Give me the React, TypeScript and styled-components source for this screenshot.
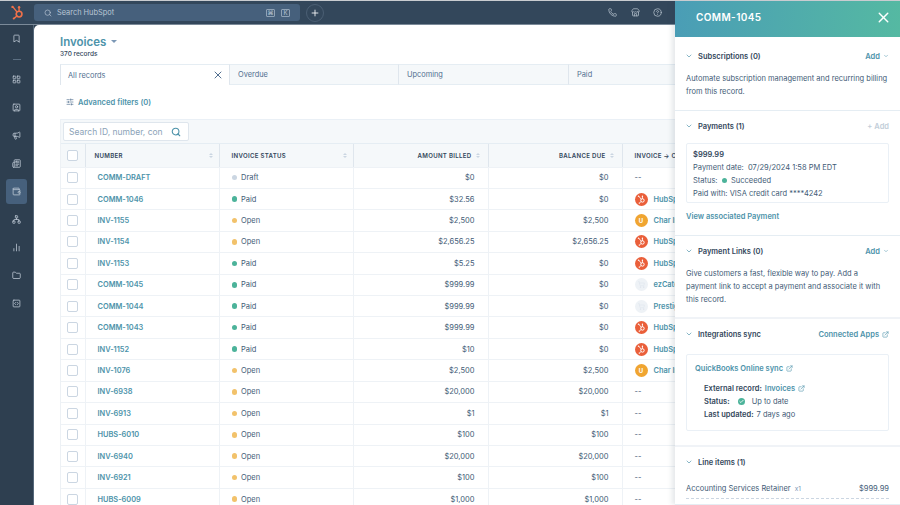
import React from "react";
import styled, { createGlobalStyle } from "styled-components";
import {
  Bookmark,
  ChartNoAxesColumn,
  ChevronDown,
  CircleHelp,
  Check,
  ExternalLink,
  Folder,
  LayoutGrid,
  Megaphone,
  Network,
  Newspaper,
  Phone,
  Plus,
  Search,
  ShoppingCart,
  SlidersHorizontal,
  SquareCode,
  SquareUser,
  Store,
  Wallet,
  X,
} from "lucide-react";

const GlobalStyle = createGlobalStyle`
  html, body { margin: 0; padding: 0; background: #fff; }
  body { font-family: "Inter", "Liberation Sans", sans-serif; color: #33475b; }
  * { box-sizing: border-box; }
`;

const Shell = styled.div`
  position: relative;
  width: 900px;
  height: 505px;
  overflow: hidden;
  display: grid;
  grid-template-columns: 34px 1fr;
  grid-template-rows: 24px 1fr;
  background: #2e3f50;
  border-top: 1px solid #c9ccd0;
`;

const TopBar = styled.header`
  grid-column: 1 / 3;
  display: flex;
  align-items: center;
  padding-right: 238px;
  background: #33475b;
  border-bottom: 1px solid #7b8a99;
`;

const LogoSlot = styled.div`
  width: 34px;
  display: flex;
  justify-content: center;
`;

const SearchBox = styled.div`
  width: 266px;
  height: 17px;
  display: flex;
  align-items: center;
  gap: 5px;
  padding: 0 10px;
  border-radius: 3px;
  background: #46607c;
  color: #b9c6d4;
  font-size: 7.4px;
`;

const SearchLabel = styled.span`
  flex: 1;
`;

const Key = styled.span`
  width: 9px;
  height: 8px;
  display: flex;
  align-items: center;
  justify-content: center;
  border: 1px solid #8fa2b6;
  border-radius: 1px;
  font-size: 6px;
  margin-left: 1px;
`;

const AddButton = styled.div`
  width: 18px;
  height: 18px;
  margin-left: 6px;
  display: flex;
  align-items: center;
  justify-content: center;
  border: 1px solid #4b5f74;
  border-radius: 50%;
  color: #fff;
`;

const TopIcons = styled.div`
  margin-left: auto;
  display: flex;
  gap: 13.5px;
  color: #b4c0cc;
`;

const SideBar = styled.nav`
  display: flex;
  flex-direction: column;
  align-items: center;
  padding-top: 0.5px;
  background: #2e3f50;
  border-right: 1px solid #56687a;
`;

const SideItem = styled.div<{ $active?: boolean }>`
  width: 21px;
  height: 25px;
  margin-bottom: 3px;
  flex: none;
  display: flex;
  align-items: center;
  justify-content: center;
  border-radius: 3px;
  color: #c3ced9;
  background: ${(p) => (p.$active ? "#46607c" : "transparent")};
`;

const SideRule = styled.div`
  width: 8px;
  height: 1px;
  margin: 5px 0 7px;
  flex: none;
  background: #5c6f82;
`;

const Main = styled.main`
  position: relative;
  background: #fff;
  border-top-left-radius: 5px;
  overflow: hidden;
  padding: 10px 0 0 26px;
`;

const TitleRow = styled.div`
  display: flex;
  align-items: center;
  gap: 5px;
  height: 13px;
  color: #4d93aa;
  font-size: 11.5px;
  font-weight: 600;
`;

const Caret = styled.span`
  width: 0;
  height: 0;
  border-left: 3px solid transparent;
  border-right: 3px solid transparent;
  border-top: 3.5px solid #7c98b6;
`;

const RecordCount = styled.div`
  margin-top: 1px;
  height: 10px;
  font-size: 6.5px;
  font-weight: 500;
  line-height: 10px;
`;

const Tabs = styled.div`
  margin-top: 5px;
  height: 21px;
  display: grid;
  grid-template-columns: 169px 169px 170px 260px;
  width: 800px;
`;

const Tab = styled.div<{ $active?: boolean }>`
  display: flex;
  align-items: center;
  justify-content: space-between;
  padding: 0 5px 0 ${(p) => (p.$active ? 7 : 8)}px;
  font-size: 7.4px;
  color: #516f90;
  background: ${(p) => (p.$active ? "#fff" : "#f5f8fa")};
  border-top: 1px solid #e5edf3;
  border-left: 1px solid #dfe6ed;
  border-bottom: ${(p) => (p.$active ? "0" : "1px solid #e5edf3")};
`;

const FilterRow = styled.div`
  height: 34px;
  display: flex;
  align-items: center;
  gap: 4px;
  padding-left: 6px;
  color: #4d93aa;
  font-size: 7.6px;
  font-weight: 600;
`;

const FilterIcon = styled.span`
  color: #516f90;
  display: flex;
`;

const TableWrap = styled.div`
  width: 800px;
  border-left: 1px solid #edf1f5;
`;

const SearchBand = styled.div`
  height: 24px;
  display: flex;
  align-items: center;
  padding-left: 2px;
  background: #f5f8fa;
  border-top: 1px solid #eaf0f6;
`;

const TableSearch = styled.div`
  width: 126px;
  height: 19px;
  display: flex;
  align-items: center;
  justify-content: space-between;
  padding: 0 7px 0 5px;
  background: #fff;
  border: 1px solid #dfe6ed;
  border-radius: 2px;
  color: #8ca3b8;
  font-size: 8.5px;
  white-space: nowrap;
  overflow: hidden;
`;

const SearchGlyph = styled(Search)`
  color: #4d93aa;
  flex: none;
`;

const Row = styled.div<{ $head?: boolean }>`
  display: grid;
  grid-template-columns: 24.5px 134px 134px 135px 134px 1fr;
  height: ${(p) => (p.$head ? "24.5px" : "21.43px")};
  background: ${(p) => (p.$head ? "#f5f8fa" : "#fff")};
  border-top: ${(p) => (p.$head ? "1px solid #e5edf3" : "0")};
  border-bottom: 1px solid #eef2f6;
`;

const Cell = styled.div<{ $right?: boolean; $head?: boolean }>`
  display: flex;
  align-items: center;
  justify-content: ${(p) => (p.$right ? "flex-end" : "flex-start")};
  padding: ${(p) => (p.$right ? "0 13px 0 0" : "0 0 0 12px")};
  border-right: 1px solid ${(p) => (p.$head ? "#dfe6ed" : "#eef2f6")};
  font-size: 7.5px;
  color: #425b76;
  white-space: nowrap;
  overflow: hidden;
`;

const CheckCell = styled(Cell)`
  padding: 0;
  justify-content: center;
`;

const HeadCell = styled(Cell)<{ $pad?: number }>`
  justify-content: ${(p) => (p.$right ? "flex-end" : "space-between")};
  padding: ${(p) => (p.$right ? "0 8px 0 0" : `0 6px 0 ${p.$pad ?? 12}px`)};
  gap: 4px;
  font-size: 6.1px;
  font-weight: 600;
  letter-spacing: 0.3px;
  color: #33475b;
`;

const Box = styled.span`
  width: 11px;
  height: 11px;
  background: #fff;
  border: 1px solid #cbd6e2;
  border-radius: 2px;
`;

const Sort = styled.span`
  display: flex;
  flex-direction: column;
  gap: 1px;
  &::before,
  &::after {
    content: "";
    width: 0;
    height: 0;
    border-left: 2px solid transparent;
    border-right: 2px solid transparent;
  }
  &::before { border-bottom: 2.5px solid #cbd6e2; }
  &::after { border-top: 2.5px solid #cbd6e2; }
`;

const RecordLink = styled.span`
  color: #4d93aa;
  font-size: 7.4px;
  font-weight: 600;
`;

const Dot = styled.span<{ $color: string }>`
  width: 5.5px;
  height: 5.5px;
  margin-right: 4px;
  border-radius: 50%;
  flex: none;
  background: ${(p) => p.$color};
`;

const PaymentDot = styled(Dot)`
  margin: 0 1px;
`;

const Avatar = styled.span<{ $color: string }>`
  width: 13px;
  height: 13px;
  margin-right: 6px;
  border-radius: 50%;
  flex: none;
  display: flex;
  align-items: center;
  justify-content: center;
  background: ${(p) => p.$color};
  color: #fff;
  font-size: 6px;
  font-weight: 700;
`;

const Panel = styled.aside`
  position: absolute;
  top: 0;
  right: 0;
  bottom: 0;
  width: 225px;
  background: #fff;
  box-shadow: -3px 0 5px rgba(45, 62, 80, 0.12);
  font-size: 7.5px;
  color: #425b76;
  line-height: 13px;
`;

const PanelHead = styled.div`
  height: 36px;
  display: flex;
  align-items: center;
  justify-content: space-between;
  padding: 0 8px 3px 21px;
  color: #fff;
  font-size: 10px;
  font-weight: 600;
  letter-spacing: 0.4px;
  background: linear-gradient(95deg, #4a9db6, #55b9a2);
`;

const Section = styled.section<{ $h: number; $thick?: boolean }>`
  display: flow-root;
  height: ${(p) => p.$h}px;
  padding: 0 11px;
  border-bottom: ${(p) => (p.$thick ? "2px solid #f0f3f7" : "1px solid #e5edf3")};
`;

const SectionTitle = styled.div<{ $top: number }>`
  display: flex;
  align-items: center;
  height: 12px;
  margin-top: ${(p) => p.$top}px;
  font-weight: 600;
  color: #33475b;
`;

const Chevron = styled(ChevronDown)`
  color: #4d93aa;
  margin-right: 5px;
  margin-left: -1px;
  flex: none;
`;

const ActionLink = styled.span<{ $muted?: boolean }>`
  margin-left: auto;
  display: flex;
  align-items: center;
  gap: 3px;
  font-weight: 600;
  color: ${(p) => (p.$muted ? "#c2ced9" : "#4d93aa")};
`;

const Body = styled.p<{ $top: number }>`
  margin: ${(p) => p.$top}px 0 0;
  width: 202px;
`;

const Card = styled.div<{ $h: number; $pad: string; $top: number }>`
  height: ${(p) => p.$h}px;
  margin-top: ${(p) => p.$top}px;
  padding: ${(p) => p.$pad};
  border: 1px solid #eaf0f6;
  border-radius: 2px;
`;

const Strong = styled.b`
  display: block;
  font-weight: 600;
  color: #33475b;
`;

const Inline = styled.div`
  display: flex;
  align-items: center;
  gap: 3px;
  white-space: nowrap;
`;

const TextLink = styled.span`
  color: #4d93aa;
  font-weight: 600;
`;

const LinkBelow = styled(TextLink)`
  display: block;
  margin-top: 7px;
`;

const Indented = styled.div`
  margin: 7px 0 0 9px;
`;

const SyncBadge = styled.span`
  width: 7px;
  height: 7px;
  margin: 0 4px 0 5px;
  display: flex;
  align-items: center;
  justify-content: center;
  border-radius: 50%;
  background: #4cb39a;
  color: #fff;
`;

const LineItem = styled.div`
  height: 20px;
  margin-top: 11px;
  display: flex;
  align-items: center;
  justify-content: space-between;
  border-bottom: 1px dashed #cbd6e2;
`;

const Qty = styled.span`
  margin-left: 4px;
  font-size: 6.5px;
  color: #7c98b6;
`;

const HubLogo = ({ size, color }: { size: number; color: string }) => (
  <svg width={size} height={size} viewBox="0 0 24 24" fill="none">
    <circle cx="14.5" cy="14.5" r="4.6" stroke={color} strokeWidth="2.6" />
    <path d="M14.5 9.5V4.5M5 3.5l6 7.5M7 21l4-3.5" stroke={color} strokeWidth="2.2" strokeLinecap="round" />
    <circle cx="14.5" cy="3.5" r="1.9" fill={color} />
    <circle cx="4" cy="3" r="1.9" fill={color} />
    <circle cx="6" cy="21.5" r="1.7" fill={color} />
  </svg>
);

type Company = "hub" | "char" | "ez" | "prest" | null;

const rows: [string, "Draft" | "Paid" | "Open", string, string, Company][] = [
  ["COMM-DRAFT", "Draft", "$0", "$0", null],
  ["COMM-1046", "Paid", "$32.56", "$0", "hub"],
  ["INV-1155", "Open", "$2,500", "$2,500", "char"],
  ["INV-1154", "Open", "$2,656.25", "$2,656.25", "hub"],
  ["INV-1153", "Paid", "$5.25", "$0", "hub"],
  ["COMM-1045", "Paid", "$999.99", "$0", "ez"],
  ["COMM-1044", "Paid", "$999.99", "$0", "prest"],
  ["COMM-1043", "Paid", "$999.99", "$0", "hub"],
  ["INV-1152", "Paid", "$10", "$0", "hub"],
  ["INV-1076", "Open", "$2,500", "$2,500", "char"],
  ["INV-6938", "Open", "$20,000", "$20,000", null],
  ["INV-6913", "Open", "$1", "$1", null],
  ["HUBS-6010", "Open", "$100", "$100", null],
  ["INV-6940", "Open", "$20,000", "$20,000", null],
  ["INV-6921", "Open", "$100", "$100", null],
  ["HUBS-6009", "Open", "$1,000", "$1,000", null],
];

const statusColors = { Draft: "#cbd6e2", Paid: "#4cb39a", Open: "#f2c26b" };

const companyCell = (company: Company) => {
  if (company === "hub")
    return (
      <>
        <Avatar $color="#ea5f3a"><HubLogo size={9} color="#fff" /></Avatar>
        <RecordLink>HubSpot</RecordLink>
      </>
    );
  if (company === "char")
    return (
      <>
        <Avatar $color="#f0a531">U</Avatar>
        <RecordLink>Char Inc</RecordLink>
      </>
    );
  if (company === "ez")
    return (
      <>
        <Avatar $color="#eef2f6"><ShoppingCart size={7} color="#dfe6ed" /></Avatar>
        <RecordLink>ezCater</RecordLink>
      </>
    );
  if (company === "prest")
    return (
      <>
        <Avatar $color="#eef2f6"><ShoppingCart size={7} color="#dfe6ed" /></Avatar>
        <RecordLink>Prestige</RecordLink>
      </>
    );
  return "--";
};

const sideIcons = [LayoutGrid, SquareUser, Megaphone, Newspaper, Wallet, Network, ChartNoAxesColumn, Folder, SquareCode];

export default function App() {
  return (
    <Shell>
      <GlobalStyle />
      <TopBar>
        <LogoSlot><HubLogo size={15} color="#f0714a" /></LogoSlot>
        <SearchBox>
          <Search size={8} />
          <SearchLabel>Search HubSpot</SearchLabel>
          <Key>⌘</Key>
          <Key>K</Key>
        </SearchBox>
        <AddButton><Plus size={10} /></AddButton>
        <TopIcons>
          <Phone size={9} />
          <Store size={9} />
          <CircleHelp size={9} />
        </TopIcons>
      </TopBar>
      <SideBar>
        <SideItem><Bookmark size={9} /></SideItem>
        <SideRule />
        {sideIcons.map((Icon, i) => (
          <SideItem key={i} $active={Icon === Wallet}><Icon size={9} /></SideItem>
        ))}
      </SideBar>
      <Main>
        <TitleRow>Invoices <Caret /></TitleRow>
        <RecordCount>370 records</RecordCount>
        <Tabs>
          <Tab $active>All records <X size={12} /></Tab>
          <Tab>Overdue</Tab>
          <Tab>Upcoming</Tab>
          <Tab>Paid</Tab>
        </Tabs>
        <FilterRow>
          <FilterIcon><SlidersHorizontal size={8} /></FilterIcon>
          Advanced filters (0)
        </FilterRow>
        <TableWrap>
          <SearchBand>
            <TableSearch>
              Search ID, number, con
              <SearchGlyph size={10} strokeWidth={2.6} />
            </TableSearch>
          </SearchBand>
          <Row $head>
            <CheckCell $head><Box /></CheckCell>
            <HeadCell $head $pad={9}>NUMBER <Sort /></HeadCell>
            <HeadCell $head>INVOICE STATUS <Sort /></HeadCell>
            <HeadCell $head $right>AMOUNT BILLED <Sort /></HeadCell>
            <HeadCell $head $right>BALANCE DUE <Sort /></HeadCell>
            <HeadCell $head>INVOICE → COMPANY</HeadCell>
          </Row>
          {rows.map(([id, status, amount, balance, company]) => (
            <Row key={id}>
              <CheckCell><Box /></CheckCell>
              <Cell><RecordLink>{id}</RecordLink></Cell>
              <Cell><Dot $color={statusColors[status]} />{status}</Cell>
              <Cell $right>{amount}</Cell>
              <Cell $right>{balance}</Cell>
              <Cell>{companyCell(company)}</Cell>
            </Row>
          ))}
        </TableWrap>
      </Main>
      <Panel>
        <PanelHead>COMM-1045 <X size={17} /></PanelHead>
        <Section $h={74}>
          <SectionTitle $top={13}>
            <Chevron size={8} />Subscriptions (0)
            <ActionLink>Add <ChevronDown size={6} /></ActionLink>
          </SectionTitle>
          <Body $top={10}>Automate subscription management and recurring billing from this record.</Body>
        </Section>
        <Section $h={125}>
          <SectionTitle $top={9}>
            <Chevron size={8} />Payments (1)
            <ActionLink $muted>+ Add</ActionLink>
          </SectionTitle>
          <Card $h={60} $top={11} $pad="4px 6px">
            <Strong>$999.99</Strong>
            <div>Payment date:&nbsp; 07/29/2024 1:58 PM EDT</div>
            <Inline>Status: <PaymentDot $color="#4cb39a" />Succeeded</Inline>
            <div>Paid with: VISA credit card ****4242</div>
          </Card>
          <LinkBelow>View associated Payment</LinkBelow>
        </Section>
        <Section $h={83} $thick>
          <SectionTitle $top={9}>
            <Chevron size={8} />Payment Links (0)
            <ActionLink>Add <ChevronDown size={6} /></ActionLink>
          </SectionTitle>
          <Body $top={10}>Give customers a fast, flexible way to pay. Add a payment link to accept a payment and associate it with this record.</Body>
        </Section>
        <Section $h={128} $thick>
          <SectionTitle $top={9}>
            <Chevron size={8} />Integrations sync
            <ActionLink>Connected Apps <ExternalLink size={7} /></ActionLink>
          </SectionTitle>
          <Card $h={77} $top={14} $pad="7px 8px">
            <Inline><TextLink>QuickBooks Online sync</TextLink> <ExternalLink size={7} color="#4d93aa" /></Inline>
            <Indented>
              <Inline><Strong>External record:</Strong> <TextLink>Invoices</TextLink> <ExternalLink size={7} color="#4d93aa" /></Inline>
              <Inline><Strong>Status:</Strong> <SyncBadge><Check size={5} strokeWidth={4} /></SyncBadge> Up to date</Inline>
              <Inline><Strong>Last updated:</Strong> 7 days ago</Inline>
            </Indented>
          </Card>
        </Section>
        <Section $h={58}>
          <SectionTitle $top={9}>
            <Chevron size={8} />Line items (1)
          </SectionTitle>
          <LineItem>
            <span>Accounting Services Retainer<Qty>x1</Qty></span>
            <span>$999.99</span>
          </LineItem>
        </Section>
      </Panel>
    </Shell>
  );
}
